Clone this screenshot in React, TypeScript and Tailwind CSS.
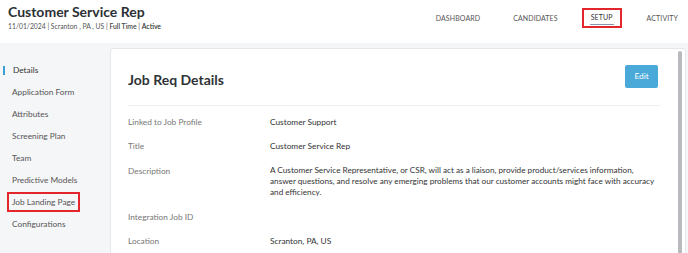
import React from 'react'

const sideItems = [
  'Details',
  'Application Form',
  'Attributes',
  'Screening Plan',
  'Team',
  'Predictive Models',
  'Job Landing Page',
  'Configurations',
]

const rows: { label: string; value?: string }[] = [
  { label: 'Linked to Job Profile', value: 'Customer Support' },
  { label: 'Title', value: 'Customer Service Rep' },
  {
    label: 'Description',
    value:
      'A Customer Service Representative, or CSR, will act as a liaison, provide product/services information, answer questions, and resolve any emerging problems that our customer accounts might face with accuracy and efficiency.',
  },
  { label: 'Integration Job ID' },
  { label: 'Location', value: 'Scranton, PA, US' },
]

export default function App() {
  return (
    <div className="w-[688px] h-[253px] overflow-hidden bg-[#f5f6f8] font-['Lato','Noto_Sans',sans-serif] text-[#333]">
      {/* ── Header ── */}
      <header className="h-[43px] bg-white flex items-start justify-between">
        <div className="pl-[8px] pt-[3px]">
          <h1 className="text-[14px] font-bold leading-[18px] text-[#2b3035]">Customer Service Rep</h1>
          <p className="text-[6.8px] leading-[9px] mt-[1px] text-[#555]">
            11/01/2024 | Scranton , PA , US | <span className="font-semibold text-[#444]">Full Time</span> |{' '}
            <span className="font-semibold text-[#333]">Active</span>
          </p>
        </div>
        <nav className="flex items-center h-[36px] pr-[10px] text-[7px] tracking-[0.1px] text-[#555] leading-[9px]">
          <span>DASHBOARD</span>
          <span className="ml-[33px]">CANDIDATES</span>
          <div className="ml-[24px] h-[20px] px-[6px] border-2 border-[#e2262b] flex flex-col items-center justify-center">
            <span className="text-[#333] mt-[2px]">SETUP</span>
            <span className="block w-[24px] h-[1px] bg-[#8598b0] mt-[2px]" />
          </div>
          <span className="ml-[25px]">ACTIVITY</span>
        </nav>
      </header>

      <div className="flex">
        {/* ── Sidebar ── */}
        <aside className="w-[110px] pt-[16px] text-[8.3px] leading-[12px]">
          {sideItems.map(item =>
            item === 'Details' ? (
              <div key={item} className="flex items-center h-[22px]">
                <span className="w-[2px] h-[9px] bg-[#3d9fd5] ml-[3px]" />
                <span className="ml-[8px] text-[#333]">{item}</span>
              </div>
            ) : item === 'Job Landing Page' ? (
              <div key={item} className="flex items-center h-[22px]">
                <span className="ml-[7px] px-[3px] py-[2px] border-2 border-[#e2262b] text-[#555]">{item}</span>
              </div>
            ) : (
              <div key={item} className="flex items-center h-[22px] pl-[12px] text-[#555]">{item}</div>
            )
          )}
        </aside>

        {/* ── Card ── */}
        <main className="flex-1 mt-[5px] mr-[2px] h-[220px] bg-white border border-[#e6e7ea] rounded-[3px] flex">
          <div className="flex-1 pl-[17px] pr-[18px]">
            <div className="flex justify-between items-start pb-[16px] border-b border-[#eeeff1]">
              <h2 className="mt-[22px] text-[14px] font-bold leading-[18px] text-[#2f3336]">Job Req Details</h2>
              <button className="mt-[16px] mr-[2px] w-[33px] h-[23px] rounded-[2px] bg-[#4aa9d8] text-white text-[8.3px]">
                Edit
              </button>
            </div>
            <div className="pt-[4px] text-[8.3px]">
              {rows.map(r => (
                <div key={r.label} className={`flex ${r.label === 'Description' ? 'py-[6.5px]' : 'py-[6px]'}`}>
                  <div className="w-[142px] shrink-0 leading-[12px] text-[#777]">{r.label}</div>
                  <div
                    className={`flex-1 text-[#333] ${
                      r.label === 'Description' ? 'text-[8.2px] leading-[11.4px]' : 'leading-[12px]'
                    }`}
                  >
                    {r.value ?? ''}
                  </div>
                </div>
              ))}
            </div>
          </div>
          <div className="w-[4px] mt-[2px] mr-[3px] rounded-full bg-[#b9babd]" />
        </main>
      </div>
    </div>
  )
}
